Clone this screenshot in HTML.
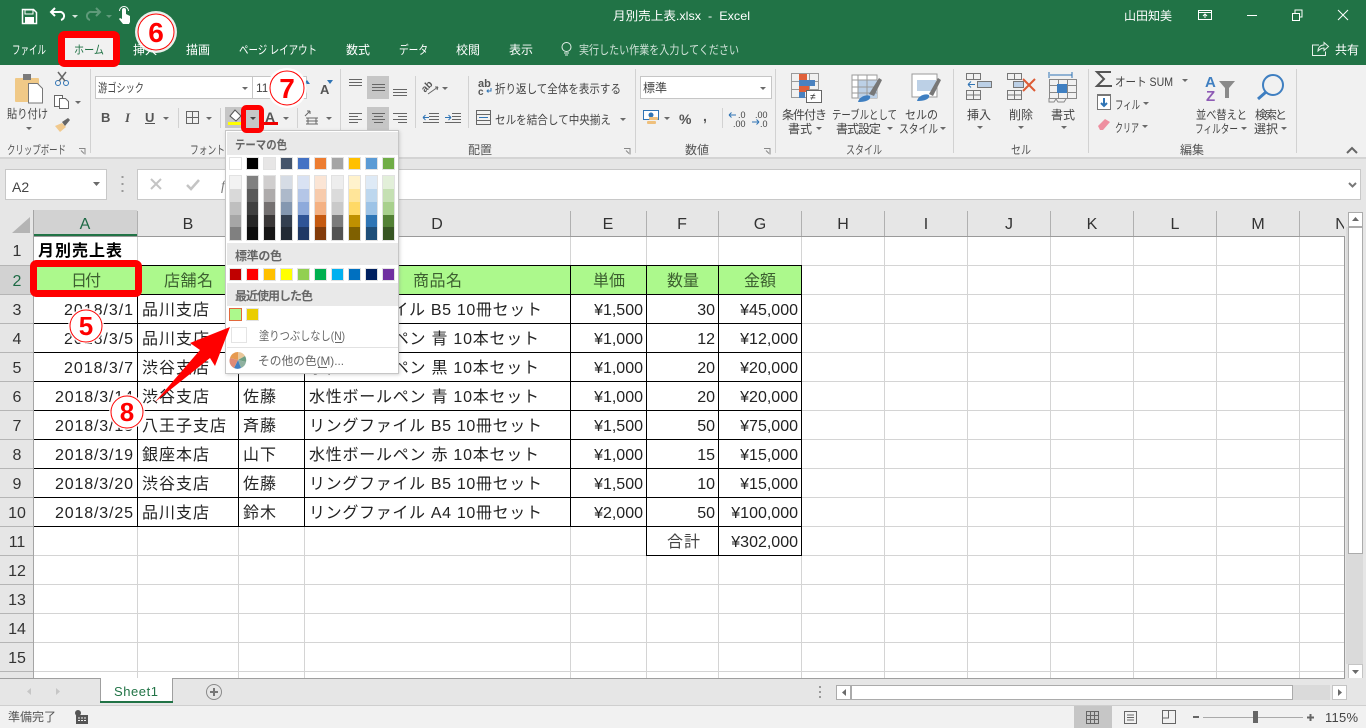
<!DOCTYPE html>
<html lang="ja"><head><meta charset="utf-8"><title>月別売上表.xlsx - Excel</title>
<style>
html,body{margin:0;padding:0;background:#fff;width:1366px;height:728px;overflow:hidden}
svg{display:block;position:absolute;left:0;top:0}
text{font-family:"Liberation Sans","Noto Sans CJK JP",sans-serif;white-space:pre}
.c{font-size:16px;fill:#222}
.h{font-size:16px;fill:#3d6030}
.r{font-size:16px;fill:#333;text-anchor:middle}
.e{text-anchor:end}
.m{font-size:12px;fill:#fff}
.t{font-size:12px;fill:#444}
.g{font-size:12px;fill:#555}
.p{font-size:12px;fill:#666;font-weight:bold}
.q{font-size:12px;fill:#666}
.gl{stroke:#d4d4d4;stroke-width:1;fill:none}
.bk{stroke:#000;stroke-width:1;fill:none}
.ic{stroke:#6a6a6a;stroke-width:1;fill:none}
.car{fill:#6a6a6a}
.num{font-family:"Liberation Sans",sans-serif;font-weight:bold;fill:#f00;text-anchor:middle}
</style></head><body>
<svg width="1366" height="728" viewBox="0 0 1366 728" xmlns="http://www.w3.org/2000/svg">
<defs><filter id="sh" x="-20%" y="-20%" width="140%" height="140%"><feGaussianBlur stdDeviation="1.5"/></filter></defs>
<!-- backgrounds -->
<rect x="0" y="0" width="1366" height="65" fill="#217346"/>
<rect x="0" y="65" width="1366" height="93" fill="#f1f1f1"/>
<rect x="0" y="158" width="1366" height="52" fill="#e6e6e6"/>
<rect x="0" y="157" width="1366" height="2" fill="#d4d4d4"/>
<rect x="0" y="210" width="1366" height="468" fill="#e6e6e6"/>
<rect x="33" y="236" width="1311" height="442" fill="#fff"/>

<!-- grid -->
<path class="gl" d="M137.5 236V678M238.5 236V678M304.5 236V678M570.5 236V678M646.5 236V678M718.5 236V678M801.5 236V678M884.5 236V678M967.5 236V678M1050.5 236V678M1133.5 236V678M1216.5 236V678M1299.5 236V678"/>
<path class="gl" d="M33 265.5H1344M33 294.5H1344M33 323.5H1344M33 352.5H1344M33 381.5H1344M33 410.5H1344M33 439.5H1344M33 468.5H1344M33 497.5H1344M33 526.5H1344M33 555.5H1344M33 584.5H1344M33 613.5H1344M33 642.5H1344M33 671.5H1344"/>
<rect x="33" y="265" width="769" height="29" fill="#acf98c"/>
<path class="bk" d="M33 265.5H802M33 294.5H802M33 323.5H802M33 352.5H802M33 381.5H802M33 410.5H802M33 439.5H802M33 468.5H802M33 497.5H802M33 526.5H802M646 555.5H802M33.5 265V527M137.5 265V527M238.5 265V527M304.5 265V527M570.5 265V527M646.5 265V556M718.5 265V556M801.5 265V556"/>
<path d="M1344.5 236V678M33 236.5H1344" stroke="#9a9a9a" fill="none"/>

<!-- headers -->
<rect x="33" y="210" width="104" height="26" fill="#d2d2d2"/>
<rect x="33" y="234" width="105" height="2" fill="#217346"/>
<rect x="0" y="265" width="33" height="29" fill="#d2d2d2"/>
<polygon points="30,217 30,233 12,233" fill="#b4b4b4"/>
<path d="M33.5 210V678" stroke="#a5a5a5"/>
<path d="M137.5 211V236M238.5 211V236M304.5 211V236M570.5 211V236M646.5 211V236M718.5 211V236M801.5 211V236M884.5 211V236M967.5 211V236M1050.5 211V236M1133.5 211V236M1216.5 211V236M1299.5 211V236" stroke="#b0b0b0"/>
<path d="M0 265.5H33M0 294.5H33M0 323.5H33M0 352.5H33M0 381.5H33M0 410.5H33M0 439.5H33M0 468.5H33M0 497.5H33M0 526.5H33M0 555.5H33M0 584.5H33M0 613.5H33M0 642.5H33M0 671.5H33" stroke="#b5b5b5"/>
<text class="r" x="85" y="229" style="fill:#1d6a45">A</text><text class="r" x="188" y="229">B</text><text class="r" x="437" y="229">D</text><text class="r" x="608" y="229">E</text><text class="r" x="682" y="229">F</text><text class="r" x="760" y="229">G</text><text class="r" x="843" y="229">H</text><text class="r" x="926" y="229">I</text><text class="r" x="1009" y="229">J</text><text class="r" x="1092" y="229">K</text><text class="r" x="1175" y="229">L</text><text class="r" x="1258" y="229">M</text>
<svg x="1330" y="210" width="14" height="26"><text class="r" x="11" y="19">N</text></svg>
<text class="r" x="17" y="256">1</text><text class="r" x="17" y="286" style="fill:#1d6a45">2</text><text class="r" x="17" y="315">3</text><text class="r" x="17" y="344">4</text><text class="r" x="17" y="373">5</text><text class="r" x="17" y="402">6</text><text class="r" x="17" y="431">7</text><text class="r" x="17" y="460">8</text><text class="r" x="17" y="489">9</text><text class="r" x="17" y="518">10</text><text class="r" x="17" y="547">11</text><text class="r" x="17" y="576">12</text><text class="r" x="17" y="605">13</text><text class="r" x="17" y="634">14</text><text class="r" x="17" y="663">15</text>

<!-- cells -->
<text class="c" x="38" y="256" textLength="84" style="font-weight:bold;fill:#000">月別売上表</text>
<text class="h" x="71" y="286" textLength="30">日付</text><text class="h" x="164" y="286" textLength="49">店舗名</text><text class="h" x="413" y="286" textLength="49">商品名</text><text class="h" x="593" y="286" textLength="32">単価</text><text class="h" x="667" y="286" textLength="32">数量</text><text class="h" x="744" y="286" textLength="32">金額</text>
<g class="c">
<text class="c" x="64" y="315" textLength="69">2018/3/1</text><text class="c" x="64" y="344" textLength="69">2018/3/5</text><text class="c" x="64" y="373" textLength="69">2018/3/7</text><text class="c" x="55" y="402" textLength="78">2018/3/14</text><text class="c" x="55" y="431" textLength="78">2018/3/15</text><text class="c" x="55" y="460" textLength="78">2018/3/19</text><text class="c" x="55" y="489" textLength="78">2018/3/20</text><text class="c" x="55" y="518" textLength="78">2018/3/25</text>
<text class="c" x="142" y="315" textLength="67">品川支店</text><text class="c" x="142" y="344" textLength="67">品川支店</text><text class="c" x="142" y="373" textLength="67">渋谷支店</text><text class="c" x="142" y="402" textLength="67">渋谷支店</text><text class="c" x="142" y="431" textLength="84">八王子支店</text><text class="c" x="142" y="460" textLength="67">銀座本店</text><text class="c" x="142" y="489" textLength="67">渋谷支店</text><text class="c" x="142" y="518" textLength="67">品川支店</text>
<text class="c" x="243" y="402" textLength="33">佐藤</text><text class="c" x="243" y="431" textLength="33">斉藤</text><text class="c" x="243" y="460" textLength="33">山下</text><text class="c" x="243" y="489" textLength="33">佐藤</text><text class="c" x="243" y="518" textLength="33">鈴木</text>
<text class="c" x="309" y="315" textLength="233">リングファイル B5 10冊セット</text><text class="c" x="309" y="344" textLength="230">水性ボールペン 青 10本セット</text><text class="c" x="309" y="373" textLength="230">水性ボールペン 黒 10本セット</text><text class="c" x="309" y="402" textLength="230">水性ボールペン 青 10本セット</text><text class="c" x="309" y="431" textLength="233">リングファイル B5 10冊セット</text><text class="c" x="309" y="460" textLength="230">水性ボールペン 赤 10本セット</text><text class="c" x="309" y="489" textLength="233">リングファイル B5 10冊セット</text><text class="c" x="309" y="518" textLength="233">リングファイル A4 10冊セット</text>
<text class="c e" x="643" y="315">¥1,500</text><text class="c e" x="643" y="344">¥1,000</text><text class="c e" x="643" y="373">¥1,000</text><text class="c e" x="643" y="402">¥1,000</text><text class="c e" x="643" y="431">¥1,500</text><text class="c e" x="643" y="460">¥1,000</text><text class="c e" x="643" y="489">¥1,500</text><text class="c e" x="643" y="518">¥2,000</text>
<text class="c e" x="715" y="315">30</text><text class="c e" x="715" y="344">12</text><text class="c e" x="715" y="373">20</text><text class="c e" x="715" y="402">20</text><text class="c e" x="715" y="431">50</text><text class="c e" x="715" y="460">15</text><text class="c e" x="715" y="489">10</text><text class="c e" x="715" y="518">50</text>
<text class="c e" x="798" y="315">¥45,000</text><text class="c e" x="798" y="344">¥12,000</text><text class="c e" x="798" y="373">¥20,000</text><text class="c e" x="798" y="402">¥20,000</text><text class="c e" x="798" y="431">¥75,000</text><text class="c e" x="798" y="460">¥15,000</text><text class="c e" x="798" y="489">¥15,000</text><text class="c e" x="798" y="518">¥100,000</text>
<text class="c" x="667" y="547" textLength="33" style="fill:#444">合計</text><text class="c e" x="798" y="547">¥302,000</text>
</g>

<!-- title bar -->
<path d="M22.5 9.5h11l3 3v11h-14z" fill="none" stroke="#fff" stroke-width="1.5"/><rect x="25" y="10" width="8" height="4" fill="none" stroke="#fff"/><rect x="25" y="17" width="9" height="6" fill="#fff"/>
<path d="M55 8l-4 4 4 4M51 12h8a4 4 0 0 1 2 8" fill="none" stroke="#fff" stroke-width="2"/>
<polygon points="72,15 78,15 75,18" fill="#d5e5dc"/>
<path d="M96 8l4 4-4 4M100 12h-8a4 4 0 0 0-2 8" fill="none" stroke="#5f9a7a" stroke-width="2"/>
<polygon points="106,15 112,15 109,18" fill="#5f9a7a"/>
<path d="M122 15V10a2 2 0 0 1 4 0v4l4 2v6l-1 2h-6l-4-5 1-1 2 1z" fill="#fff"/><path d="M119.500 11a4.500 4.500 0 0 1 9 0" fill="none" stroke="#fff"/>
<text class="m" x="613" y="20" textLength="137" lengthAdjust="spacingAndGlyphs">月別売上表.xlsx  -  Excel</text>
<text class="m" x="1124" y="20" textLength="48">山田知美</text>
<rect x="1198.500" y="10.500" width="13" height="9" fill="none" stroke="#fff"/><path d="M1198 12.500h14M1205 18v-4m-2 2l2-2 2 2" stroke="#fff" fill="none"/>
<rect x="1247" y="15" width="10" height="1" fill="#fff"/>
<path d="M1292.500 13.500h7v7h-7zM1295 13v-3h7v7h-3" fill="none" stroke="#fff"/>
<path d="M1338 10l10 10M1348 10l-10 10" stroke="#fff" fill="none"/>

<!-- tabs -->
<text class="m" x="12" y="54" textLength="34" lengthAdjust="spacingAndGlyphs">ファイル</text>
<text class="m" x="133" y="54" textLength="24">挿入</text>
<text class="m" x="186" y="54" textLength="24">描画</text>
<text class="m" x="239" y="54" textLength="78" lengthAdjust="spacingAndGlyphs">ページ レイアウト</text>
<text class="m" x="346" y="54" textLength="24">数式</text>
<text class="m" x="399" y="54" textLength="29" lengthAdjust="spacingAndGlyphs">データ</text>
<text class="m" x="456" y="54" textLength="24">校閲</text>
<text class="m" x="509" y="54" textLength="24">表示</text>
<circle cx="566.500" cy="47" r="4.500" fill="none" stroke="#e2efe8"/><path d="M564 53h5M565 55h3" stroke="#e2efe8"/>
<text class="m" x="579" y="54" textLength="160" lengthAdjust="spacingAndGlyphs" style="fill:#d0e2d8">実行したい作業を入力してください</text>
<path d="M1319 45h-6.500v10.500h13v-4M1318 51c0-4 3-6 6-6v-2.500l4.500 4-4.500 4V48c-2 0-4 1-6 3z" fill="none" stroke="#e8f1ec"/>
<text class="m" x="1335" y="54" textLength="24">共有</text>
<rect x="65" y="37" width="48" height="28" fill="#f1f1f1"/>
<text class="t" x="74" y="54" textLength="30" lengthAdjust="spacingAndGlyphs" style="fill:#217346">ホーム</text>

<!-- ribbon separators -->
<path d="M90.500 69V153M340.500 69V153M635.500 69V153M775.500 69V153M953.500 69V153M1088.500 69V153M1296.500 69V153" stroke="#d2d2d2"/>
<path d="M178.500 108V128M220.500 108V128M297.500 108V128M415.500 76V128M468.500 76V128M722.500 108V128" stroke="#d2d2d2"/>

<!-- clipboard -->
<rect x="15" y="78" width="24" height="24" rx="1" fill="#f0c987"/><rect x="23" y="74" width="8" height="6" fill="#7a7a7a"/>
<path d="M28.500 83.500h9l5 5v14.500h-14z" fill="#fff" stroke="#777"/>
<circle cx="58" cy="83" r="2.500" fill="none" stroke="#2f74b5"/><circle cx="66" cy="83" r="2.500" fill="none" stroke="#2f74b5"/><path d="M58 72l7 9M66 72l-7 9" stroke="#666" stroke-width="1.500"/>
<path d="M54.500 95.500h8v11h-8z" fill="#fff" stroke="#666"/><path d="M59.500 98.500h6l3 3v7h-9z" fill="#fff" stroke="#666"/>
<polygon points="75,101 81,101 78,104" class="car"/>
<path d="M55 126l7-3 4 4-6 5z" fill="#f1c98d"/><path d="M62 122l6-4 2 2-5 6z" fill="#666"/>
<text class="t" x="7" y="118" textLength="41" lengthAdjust="spacingAndGlyphs">貼り付け</text>
<polygon points="26,127 32,127 29,130" class="car"/>
<text class="g" x="7" y="154" textLength="59" lengthAdjust="spacingAndGlyphs">クリップボード</text>
<path d="M79 148.500h6v6M81 150.500l3 3" stroke="#888" fill="none"/>

<!-- font group -->
<rect x="95.500" y="76.500" width="157" height="22" fill="#fff" stroke="#c6c6c6"/>
<rect x="252.500" y="76.500" width="54" height="22" fill="#fff" stroke="#c6c6c6"/>
<text class="t" x="98" y="92" textLength="46" lengthAdjust="spacingAndGlyphs">游ゴシック</text>
<polygon points="242,87 248,87 245,90" class="car"/>
<text class="t" x="256" y="92">11</text>
<text x="320" y="94" style="font-size:13px;fill:#555;font-weight:bold">A</text><polygon points="327,80 333,80 330,84" fill="#2f74b5"/>
<polygon points="304,84 310,84 307,80" fill="#2f74b5"/>
<text x="101" y="122" style="font-size:13px;font-weight:bold;fill:#555">B</text>
<text x="125" y="122" style="font-size:13px;font-style:italic;font-weight:bold;fill:#555;font-family:'Liberation Serif',serif">I</text>
<text x="145" y="122" style="font-size:13px;font-weight:bold;fill:#555">U</text><rect x="145" y="123" width="10" height="1" fill="#555"/>
<polygon points="163,117 169,117 166,120" class="car"/>
<path d="M186.500 111.500h12v12h-12zM192.500 111v13M186 117.500h13" stroke="#666" fill="none"/>
<polygon points="206,117 212,117 209,120" class="car"/>
<rect x="225" y="107" width="17" height="21" fill="#c6c6c6"/>
<path d="M230 116l5-6 6 6-5 5z" fill="#fff" stroke="#555"/>
<rect x="228" y="122" width="13" height="3" fill="#ff0"/>
<rect x="259" y="107" width="5" height="21" fill="#f1f1f1"/>
<text x="265" y="122" style="font-size:14px;font-weight:bold;fill:#555">A</text>
<rect x="264" y="122" width="14" height="3" fill="#e00"/>
<polygon points="283,117 289,117 286,120" class="car"/>
<path d="M305 116l5-5m0 0h-3m3 0v3M306 118h12M308 118v6M316 118v6M306 121h12M306 124h12" stroke="#666" fill="none"/>
<polygon points="326,117 332,117 329,120" class="car"/>
<text class="g" x="190" y="154" textLength="35" lengthAdjust="spacingAndGlyphs">フォント</text>

<!-- alignment -->
<rect x="367" y="76" width="22" height="23" fill="#c6c6c6"/><rect x="367" y="107" width="22" height="23" fill="#c6c6c6"/>
<path d="M349 79.500h13M349 82.500h13M349 85.500h13M372 84.500h13M372 87.500h13M372 90.500h13M393 89.500h14M393 92.500h14M393 95.500h14" stroke="#666"/>
<path d="M349 113.500h13M349 116.500h9M349 119.500h13M349 122.500h9M372 113.500h13M374 116.500h9M372 119.500h13M374 122.500h9M393 113.500h14M398 116.500h9M393 119.500h14M398 122.500h9" stroke="#666"/>
<text transform="rotate(-45 425 90)" x="423" y="92" style="font-size:10px;font-weight:bold;fill:#555">ab</text><path d="M428 94l10-7m0 0l-3 0m3 0l-1 3" stroke="#666" fill="none"/>
<polygon points="442,87 448,87 445,90" class="car"/>
<path d="M429 113.500h10M429 116.500h10M429 119.500h10M423 122.500h16" stroke="#666" fill="none"/><path d="M423 117.500h6m-6 0l2.500-2.500m-2.500 2.500l2.500 2.500" stroke="#2f74b5" fill="none"/>
<path d="M452 113.500h9M452 116.500h9M452 119.500h9M445 122.500h16" stroke="#666" fill="none"/><path d="M445 117.500h6m0 0l-2.500-2.500m2.500 2.500l-2.500 2.500" stroke="#2f74b5" fill="none"/>
<text x="478" y="87" style="font-size:11px;font-weight:bold;fill:#555">ab</text><text x="478" y="95" style="font-size:10px;font-weight:bold;fill:#555">c</text><path d="M491 88v3h-4m1.500-1.500l-1.500 1.500 1.500 1.500" stroke="#2f74b5" fill="none"/>
<text class="t" x="495" y="93" textLength="126" lengthAdjust="spacingAndGlyphs">折り返して全体を表示する</text>
<path d="M476.500 110.500h14v14h-14zM476.500 114.500h14M476.500 120.500h14" stroke="#666" fill="none"/><path d="M479 117.500h9" stroke="#2f74b5"/>
<text class="t" x="495" y="124" textLength="116" lengthAdjust="spacingAndGlyphs">セルを結合して中央揃え</text>
<polygon points="620,118 626,118 623,121" class="car"/>
<text class="g" x="468" y="154" textLength="24">配置</text>
<path d="M624 148.500h6v6M626 150.500l3 3" stroke="#888" fill="none"/>

<!-- number -->
<rect x="640.500" y="76.500" width="131" height="22" fill="#fff" stroke="#c6c6c6"/>
<text class="t" x="643" y="92" textLength="24">標準</text>
<polygon points="760,87 766,87 763,90" class="car"/>
<rect x="643.500" y="110.500" width="15" height="9" fill="#fff" stroke="#2f74b5"/><circle cx="651" cy="115" r="2.500" fill="#2f74b5"/><rect x="649" y="117" width="9" height="3" rx="1" fill="#efc07c"/><rect x="647" y="121" width="9" height="3" rx="1" fill="#efc07c"/>
<polygon points="664,117 670,117 667,120" class="car"/>
<text x="679" y="124" style="font-size:14px;font-weight:bold;fill:#555">%</text>
<text x="703" y="121" style="font-size:14px;font-weight:bold;fill:#555">,</text>
<text x="738" y="118" style="font-size:9px;fill:#444">.0</text><text x="733" y="127" style="font-size:9px;fill:#444">.00</text><path d="M729 115h7m-7 0l2.500-2.500m-2.500 2.500l2.500 2.500" stroke="#2f74b5" fill="none"/>
<text x="755" y="118" style="font-size:9px;fill:#444">.00</text><text x="760" y="127" style="font-size:9px;fill:#444">.0</text><path d="M752 122h7m0 0l-2.500-2.500m2.500 2.500l-2.500 2.500" stroke="#2f74b5" fill="none"/>
<text class="g" x="685" y="154" textLength="24">数値</text>
<path d="M764 148.500h6v6M766 150.500l3 3" stroke="#888" fill="none"/>

<!-- styles -->
<path d="M791.500 73.500h27v24h-27zM800.500 73v25M809.500 73v25M791 81.500h28M791 89.500h28" stroke="#9a9a9a" fill="none"/>
<rect x="799" y="74" width="8" height="7" fill="#e0603a"/><rect x="799" y="80" width="16" height="6" fill="#4a82c0"/><rect x="799" y="86" width="10" height="6" fill="#e0603a"/><rect x="799" y="92" width="6" height="6" fill="#4a82c0"/>
<rect x="806.500" y="90.500" width="15" height="12" fill="#fff" stroke="#666"/><text x="810" y="100" style="font-size:10px;fill:#333">≠</text>
<text class="t" x="782" y="119" textLength="45">条件付き</text><text class="t" x="788" y="133" textLength="24">書式</text><polygon points="816,127 822,127 819,130" class="car"/>
<rect x="852" y="75" width="25" height="23" fill="#fff" stroke="#9a9a9a"/><rect x="858" y="80" width="19" height="18" fill="#bcd0e6"/><path d="M858 75v23M867 75v23M852 80h25M852 87h25M852 93h25" stroke="#9a9a9a" fill="none"/><path d="M869 94l10-16 3 2-8 16z" fill="#777"/><path d="M858 102c1-5 8-8 12-6 1 3-2 6-12 6z" fill="#3f7fc1"/>
<text class="t" x="832" y="119" textLength="65" lengthAdjust="spacingAndGlyphs">テーブルとして</text><text class="t" x="836" y="133" textLength="45">書式設定</text><polygon points="887,127 893,127 890,130" class="car"/>
<rect x="912" y="74" width="25" height="23" fill="#fff" stroke="#9a9a9a"/><rect x="917" y="80" width="19" height="11" fill="#bcd0e6"/><path d="M929 94l9-16 3 2-8 16z" fill="#777"/><path d="M917 101c1-5 8-8 12-6 1 3-2 6-12 6z" fill="#3f7fc1"/>
<text class="t" x="905" y="119" textLength="33" lengthAdjust="spacingAndGlyphs">セルの</text><text class="t" x="899" y="133" textLength="39" lengthAdjust="spacingAndGlyphs">スタイル</text><polygon points="940,127 946,127 943,130" class="car"/>
<text class="g" x="846" y="154" textLength="36" lengthAdjust="spacingAndGlyphs">スタイル</text>

<!-- cells group -->
<path d="M966.500 73.500h14v6h-14zM973.500 73v6M966.500 90.500h14v9h-14zM973.500 90v9M966 95h15" stroke="#777" fill="none"/><rect x="977.500" y="81.500" width="14" height="6" fill="#bcd0e6" stroke="#777"/><path d="M968 84.500h7m-7 0l3-3m-3 3l3 3" stroke="#2f74b5" fill="none"/>
<text class="t" x="967" y="119" textLength="24">挿入</text><polygon points="977,126 983,126 980,129" class="car"/>
<path d="M1007.500 73.500h14v6h-14zM1014.500 73v6M1007.500 90.500h14v9h-14zM1014.500 90v9M1007 95h15" stroke="#777" fill="none"/><rect x="1013.500" y="81.500" width="10" height="6" fill="#bcd0e6" stroke="#777"/><path d="M1023 79l12 12M1035 79l-12 12" stroke="#dd5b35" stroke-width="2"/>
<text class="t" x="1009" y="119" textLength="24">削除</text><polygon points="1018,126 1024,126 1021,129" class="car"/>
<path d="M1049 72v6M1072 72v6M1050 75h22" stroke="#2f74b5" fill="none"/><path d="M1049.500 79.500h27v19h-27zM1058.500 79v19M1067.500 79v19M1049 85.500h28M1049 92.500h28" stroke="#888" fill="none"/><rect x="1057" y="84" width="10" height="9" fill="#3f7fc1"/><path d="M1049 98v4h5l2-3 2 3h6l2-3" stroke="#888" fill="none"/>
<text class="t" x="1051" y="119" textLength="24">書式</text><polygon points="1061,126 1067,126 1064,129" class="car"/>
<text class="g" x="1011" y="154" textLength="20" lengthAdjust="spacingAndGlyphs">セル</text>

<!-- editing -->
<path d="M1111 72h-14l7 7-7 7h15" fill="none" stroke="#555" stroke-width="2"/>
<text class="t" x="1115" y="86" textLength="58" lengthAdjust="spacingAndGlyphs">オート SUM</text><polygon points="1182,79 1188,79 1185,82" class="car"/>
<rect x="1097.500" y="95.500" width="13" height="14" fill="#fff" stroke="#777"/><rect x="1097" y="94" width="14" height="2" fill="#777"/><path d="M1104 98v8m-3-3l3 3 3-3" stroke="#2f74b5" stroke-width="2" fill="none"/>
<text class="t" x="1115" y="109" textLength="25" lengthAdjust="spacingAndGlyphs">フィル</text><polygon points="1143,102 1149,102 1146,105" class="car"/>
<path d="M1098 126l7-7 5 3-7 8h-3z" fill="#ee8fa0"/>
<text class="t" x="1115" y="132" textLength="24" lengthAdjust="spacingAndGlyphs">クリア</text><polygon points="1142,125 1148,125 1145,128" class="car"/>
<text x="1205" y="87" style="font-size:15px;font-weight:bold;fill:#3f7fc1">A</text><text x="1206" y="101" style="font-size:15px;font-weight:bold;fill:#8e5bb5">Z</text>
<path d="M1219 81h16l-6 7v10h-4V88z" fill="#8a8a8a"/>
<text class="t" x="1196" y="119" textLength="51" lengthAdjust="spacingAndGlyphs">並べ替えと</text><text class="t" x="1195" y="133" textLength="43" lengthAdjust="spacingAndGlyphs">フィルター</text><polygon points="1241,127 1247,127 1244,130" class="car"/>
<circle cx="1273" cy="85" r="10" fill="none" stroke="#3f7fc1" stroke-width="2"/><path d="M1266 92l-8 7" stroke="#3f7fc1" stroke-width="3"/>
<text class="t" x="1255" y="119" textLength="32">検索と</text><text class="t" x="1254" y="133" textLength="24">選択</text><polygon points="1281,127 1287,127 1284,130" class="car"/>
<text class="g" x="1180" y="154" textLength="24">編集</text>
<path d="M1347 153l5-5 5 5" stroke="#666" stroke-width="2" fill="none"/>

<!-- formula bar -->
<rect x="5.500" y="169.500" width="101" height="30" fill="#fff" stroke="#c8c8c8"/>
<text x="12" y="192" style="font-size:14px;fill:#444">A2</text>
<polygon points="93,182 100,182 96.500,186" class="car"/>
<path d="M122.500 176v2M122.500 183v2M122.500 190v2" stroke="#999" stroke-width="2"/>
<rect x="137.500" y="169.500" width="1223" height="30" fill="#fff" stroke="#c8c8c8"/>
<path d="M151 179l10 10M161 179l-10 10" stroke="#c4c4c4" stroke-width="2"/>
<path d="M187 185l4 4 8-9" stroke="#c4c4c4" stroke-width="2.500" fill="none"/>
<text x="221" y="190" style="font-size:14px;font-style:italic;fill:#777;font-family:'Liberation Serif',serif">f</text>
<path d="M1349 183l3.500 3.500 3.500-3.500" stroke="#777" stroke-width="2" fill="none"/>

<!-- vertical scrollbar -->
<rect x="1345" y="210" width="21" height="468" fill="#e6e6e6"/>
<rect x="1346" y="227" width="17" height="437" fill="#dadada"/>
<rect x="1348.500" y="212.500" width="14" height="14" fill="#fff" stroke="#ababab"/>
<polygon points="1352,221 1359,221 1355.500,217" class="car"/>
<rect x="1348.500" y="227.500" width="14" height="326" fill="#fff" stroke="#ababab"/>
<rect x="1348.500" y="664.500" width="14" height="14" fill="#fff" stroke="#c4c4c4"/>
<polygon points="1352,670 1359,670 1355.500,674" class="car"/>

<!-- bottom -->
<rect x="0" y="678" width="1366" height="28" fill="#e6e6e6"/>
<rect x="0" y="678" width="100" height="1" fill="#9f9f9f"/><rect x="172" y="678" width="1173" height="1" fill="#9f9f9f"/>
<rect x="100" y="678" width="72" height="25" fill="#fff"/>
<path d="M100.500 678v24M172.500 678v24" stroke="#9f9f9f"/>
<rect x="100" y="701" width="73" height="2" fill="#217346"/>
<text x="114" y="696" textLength="44" style="font-size:13px;fill:#217346">Sheet1</text>
<polygon points="31,688 31,695 27,691.500" fill="#c6c6c6"/><polygon points="56,688 56,695 60,691.500" fill="#c6c6c6"/>
<circle cx="214" cy="692" r="7.500" fill="none" stroke="#8a8a8a"/><path d="M210 692h8M214 688v8" stroke="#777" stroke-width="2"/>
<path d="M820 686v2M820 691v2M820 696v2" stroke="#999" stroke-width="2"/>
<rect x="836.500" y="685.500" width="14" height="14" fill="#fff" stroke="#ababab"/><polygon points="846,689 846,696 842,692.500" class="car"/>
<rect x="1293" y="685" width="37" height="15" fill="#dadada"/>
<rect x="851.500" y="685.500" width="441" height="14" fill="#fff" stroke="#ababab"/>
<rect x="1332.500" y="685.500" width="14" height="14" fill="#fff" stroke="#c4c4c4"/><polygon points="1338,689 1338,696 1342,692.500" class="car"/>
<rect x="0" y="705" width="1366" height="23" fill="#f1f1f1"/><rect x="0" y="705" width="1366" height="1" fill="#cfcfcf"/>
<text class="g" x="8" y="721" textLength="48">準備完了</text>
<circle cx="78" cy="713" r="3" fill="#555"/><path d="M76 715h12v9H76z" fill="#555"/><path d="M78 718h8M78 720.500h8" stroke="#f1f1f1" stroke-dasharray="2 1"/>
<rect x="1074" y="706" width="38" height="22" fill="#c6c6c6"/>
<path d="M1086.500 711.500h12v12h-12zM1090.500 711v13M1094.500 711v13M1086 715.500h13M1086 719.500h13" stroke="#666" fill="none"/>
<path d="M1124.500 711.500h12v12h-12zM1127 715h7M1127 717.500h7M1127 720h7" stroke="#666" fill="none"/>
<path d="M1162.500 710.500h13v13h-13zM1168.500 710v8h-6" stroke="#666" fill="none"/>
<rect x="1193" y="716" width="6" height="2" fill="#666"/>
<rect x="1203" y="717" width="100" height="1" fill="#aaa"/>
<rect x="1253" y="711" width="5" height="12" fill="#666"/>
<path d="M1307 717.500h7M1310.500 714v7" stroke="#666" stroke-width="2"/>
<text x="1325" y="722" textLength="33" style="font-size:13px;fill:#444">115%</text>

<!-- popup -->
<rect x="226" y="131" width="174" height="244" fill="#888" opacity=".35" filter="url(#sh)"/>
<rect x="225.500" y="130.500" width="173" height="243" fill="#fff" stroke="#c6c6c6"/>
<rect x="227" y="132" width="171" height="23" fill="#e9e9e9"/>
<text class="p" x="235" y="149" textLength="52" lengthAdjust="spacingAndGlyphs">テーマの色</text>
<g stroke="#e2e2e2">
<rect x="229.500" y="157.500" width="12" height="12" fill="#fff"/><rect x="246.500" y="157.500" width="12" height="12" fill="#000"/><rect x="263.500" y="157.500" width="12" height="12" fill="#e7e6e6"/><rect x="280.500" y="157.500" width="12" height="12" fill="#44546a"/><rect x="297.500" y="157.500" width="12" height="12" fill="#4472c4"/><rect x="314.500" y="157.500" width="12" height="12" fill="#ed7d31"/><rect x="331.500" y="157.500" width="12" height="12" fill="#a5a5a5"/><rect x="348.500" y="157.500" width="12" height="12" fill="#ffc000"/><rect x="365.500" y="157.500" width="12" height="12" fill="#5b9bd5"/><rect x="382.500" y="157.500" width="12" height="12" fill="#70ad47"/>
</g>
<g>
<rect x="229" y="175" width="13" height="66" fill="#e2e2e2"/><rect x="246" y="175" width="13" height="66" fill="#e2e2e2"/><rect x="263" y="175" width="13" height="66" fill="#e2e2e2"/><rect x="280" y="175" width="13" height="66" fill="#e2e2e2"/><rect x="297" y="175" width="13" height="66" fill="#e2e2e2"/><rect x="314" y="175" width="13" height="66" fill="#e2e2e2"/><rect x="331" y="175" width="13" height="66" fill="#e2e2e2"/><rect x="348" y="175" width="13" height="66" fill="#e2e2e2"/><rect x="365" y="175" width="13" height="66" fill="#e2e2e2"/><rect x="382" y="175" width="13" height="66" fill="#e2e2e2"/>
<rect x="230" y="176" width="11" height="13" fill="#f2f2f2"/><rect x="230" y="189" width="11" height="13" fill="#d9d9d9"/><rect x="230" y="202" width="11" height="13" fill="#bfbfbf"/><rect x="230" y="215" width="11" height="12" fill="#a6a6a6"/><rect x="230" y="227" width="11" height="13" fill="#808080"/>
<rect x="247" y="176" width="11" height="13" fill="#808080"/><rect x="247" y="189" width="11" height="13" fill="#595959"/><rect x="247" y="202" width="11" height="13" fill="#404040"/><rect x="247" y="215" width="11" height="12" fill="#262626"/><rect x="247" y="227" width="11" height="13" fill="#0d0d0d"/>
<rect x="264" y="176" width="11" height="13" fill="#d0cece"/><rect x="264" y="189" width="11" height="13" fill="#aeabab"/><rect x="264" y="202" width="11" height="13" fill="#757171"/><rect x="264" y="215" width="11" height="12" fill="#3b3838"/><rect x="264" y="227" width="11" height="13" fill="#171616"/>
<rect x="281" y="176" width="11" height="13" fill="#d6dce5"/><rect x="281" y="189" width="11" height="13" fill="#adb9ca"/><rect x="281" y="202" width="11" height="13" fill="#8497b0"/><rect x="281" y="215" width="11" height="12" fill="#333f50"/><rect x="281" y="227" width="11" height="13" fill="#222a35"/>
<rect x="298" y="176" width="11" height="13" fill="#d9e2f3"/><rect x="298" y="189" width="11" height="13" fill="#b4c6e7"/><rect x="298" y="202" width="11" height="13" fill="#8eaadb"/><rect x="298" y="215" width="11" height="12" fill="#2f5496"/><rect x="298" y="227" width="11" height="13" fill="#1f3864"/>
<rect x="315" y="176" width="11" height="13" fill="#fbe5d5"/><rect x="315" y="189" width="11" height="13" fill="#f7cbac"/><rect x="315" y="202" width="11" height="13" fill="#f4b183"/><rect x="315" y="215" width="11" height="12" fill="#c55a11"/><rect x="315" y="227" width="11" height="13" fill="#833c0b"/>
<rect x="332" y="176" width="11" height="13" fill="#ededed"/><rect x="332" y="189" width="11" height="13" fill="#dbdbdb"/><rect x="332" y="202" width="11" height="13" fill="#c9c9c9"/><rect x="332" y="215" width="11" height="12" fill="#7b7b7b"/><rect x="332" y="227" width="11" height="13" fill="#525252"/>
<rect x="349" y="176" width="11" height="13" fill="#fff2cc"/><rect x="349" y="189" width="11" height="13" fill="#ffe599"/><rect x="349" y="202" width="11" height="13" fill="#ffd966"/><rect x="349" y="215" width="11" height="12" fill="#bf9000"/><rect x="349" y="227" width="11" height="13" fill="#7f6000"/>
<rect x="366" y="176" width="11" height="13" fill="#deeaf6"/><rect x="366" y="189" width="11" height="13" fill="#bdd7ee"/><rect x="366" y="202" width="11" height="13" fill="#9dc3e6"/><rect x="366" y="215" width="11" height="12" fill="#2e75b5"/><rect x="366" y="227" width="11" height="13" fill="#1e4e79"/>
<rect x="383" y="176" width="11" height="13" fill="#e2efd9"/><rect x="383" y="189" width="11" height="13" fill="#c5e0b3"/><rect x="383" y="202" width="11" height="13" fill="#a8d08d"/><rect x="383" y="215" width="11" height="12" fill="#538135"/><rect x="383" y="227" width="11" height="13" fill="#375623"/>
</g>
<rect x="227" y="243" width="171" height="22" fill="#e9e9e9"/>
<text class="p" x="235" y="260" textLength="47">標準の色</text>
<g stroke="#e2e2e2">
<rect x="229.500" y="268.500" width="12" height="12" fill="#c00000"/><rect x="246.500" y="268.500" width="12" height="12" fill="#f00"/><rect x="263.500" y="268.500" width="12" height="12" fill="#ffc000"/><rect x="280.500" y="268.500" width="12" height="12" fill="#ff0"/><rect x="297.500" y="268.500" width="12" height="12" fill="#92d050"/><rect x="314.500" y="268.500" width="12" height="12" fill="#00b050"/><rect x="331.500" y="268.500" width="12" height="12" fill="#00b0f0"/><rect x="348.500" y="268.500" width="12" height="12" fill="#0070c0"/><rect x="365.500" y="268.500" width="12" height="12" fill="#002060"/><rect x="382.500" y="268.500" width="12" height="12" fill="#7030a0"/>
</g>
<rect x="227" y="283" width="171" height="23" fill="#e9e9e9"/>
<text class="p" x="235" y="300" textLength="78">最近使用した色</text>
<rect x="229.500" y="308.500" width="12" height="12" fill="#acf98c" stroke="#e2683c"/>
<rect x="246.500" y="308.500" width="12" height="12" fill="#eacd00" stroke="#e2e2e2"/>
<rect x="231.500" y="327.500" width="15" height="15" fill="#fff" stroke="#e4e4e4"/>
<text class="q" x="259" y="340" textLength="86" lengthAdjust="spacingAndGlyphs">塗りつぶしなし(N)</text><rect x="335" y="342" width="7" height="1" fill="#666"/>
<rect x="227" y="347" width="171" height="1" fill="#e2e2e2"/>
<path d="M238 360V352a8 8 0 0 0-8 6z" fill="#e79a4f"/><path d="M238 360V352a8 8 0 0 1 7 4z" fill="#e9c79a"/><path d="M238 360l7-4a8 8 0 0 1 1 6z" fill="#6f9f84"/><path d="M238 360l8 2a8 8 0 0 1-5 6z" fill="#8fb1a0"/><path d="M238 360l3 8a8 8 0 0 1-7 0z" fill="#3f7fc1"/><path d="M238 360l-4 8a8 8 0 0 1-4-10z" fill="#dd8a76"/>
<text class="q" x="258" y="365" textLength="86" lengthAdjust="spacingAndGlyphs">その他の色(M)...</text><rect x="318" y="367" width="9" height="1" fill="#666"/>

<!-- annotations -->
<rect x="61.500" y="34.500" width="55" height="29" rx="3" fill="none" stroke="#f00" stroke-width="7"/>
<rect x="33.500" y="263.500" width="105" height="30" rx="3" fill="none" stroke="#f00" stroke-width="7"/>
<rect x="243.500" y="107.500" width="18" height="23" rx="3" fill="none" stroke="#f00" stroke-width="5"/>
<rect x="246" y="110" width="13" height="18" fill="#c6c6c6"/><polygon points="250,117 256,117 253,120" fill="#444"/>
<polygon points="230,327 190,343 200,350 155,402 210,358 215,366" fill="#f00"/>

<circle cx="156" cy="32" r="21" fill="#fff" opacity=".9"/><circle cx="156" cy="32" r="18" fill="#fff" stroke="#f00"/><text class="num" x="156" y="42" style="font-size:28px">6</text>
<circle cx="287" cy="88" r="20" fill="#fff" opacity=".9"/><circle cx="287" cy="88" r="17" fill="#fff" stroke="#f00"/><text class="num" x="287" y="98" style="font-size:28px">7</text>
<circle cx="86" cy="326" r="18" fill="#fff" opacity=".9"/><circle cx="86" cy="326" r="16" fill="#fff" stroke="#f00"/><text class="num" x="86" y="335" style="font-size:26px">5</text>
<circle cx="127" cy="412" r="18" fill="#fff" opacity=".9"/><circle cx="127" cy="412" r="16" fill="#fff" stroke="#f00"/><text class="num" x="127" y="421" style="font-size:26px">8</text>
</svg>
</body></html>
